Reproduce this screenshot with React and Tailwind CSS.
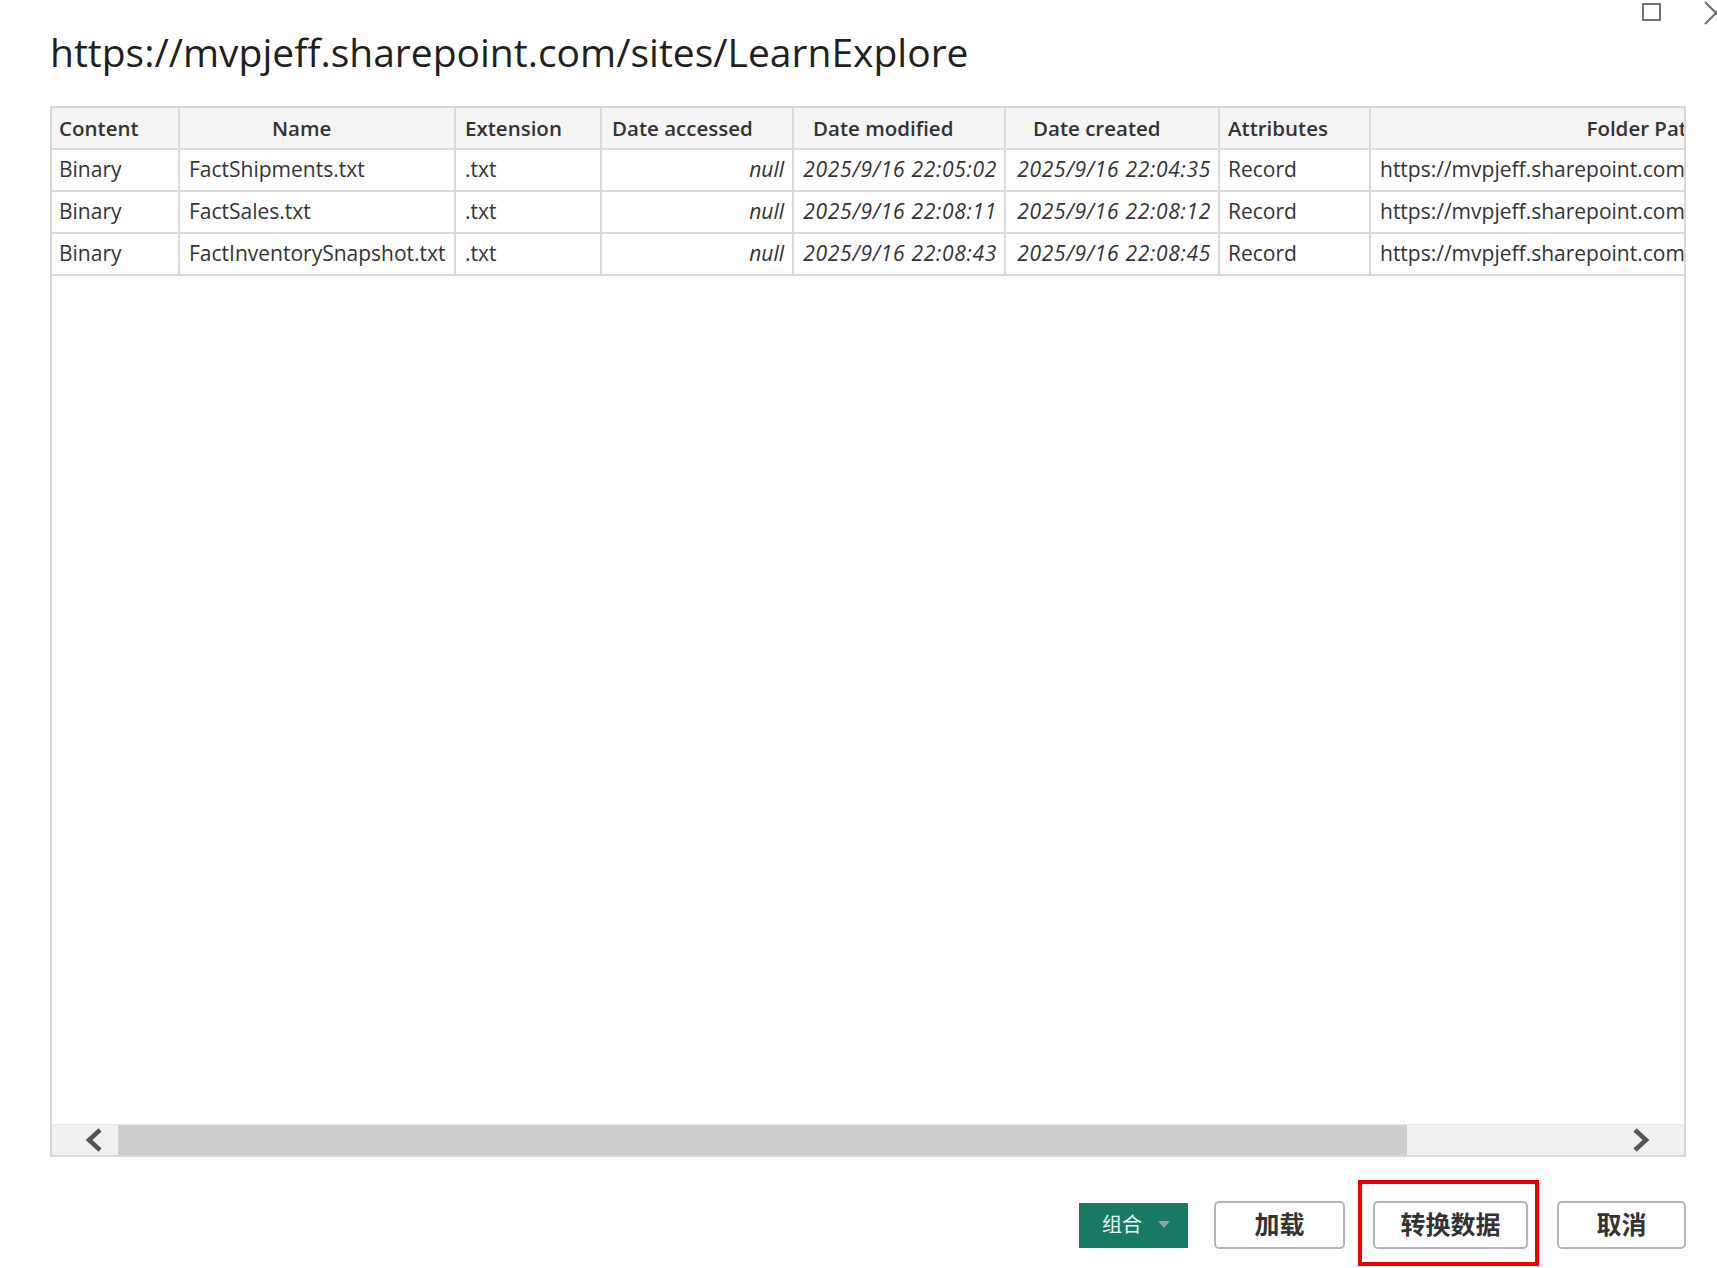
import React from 'react';

const cols = [
    { key: 'content', label: 'Content', w: 'w-[128px]', head: 'pl-[7px] bg-[#ececec]', cell: 'pl-[7px]' },
    { key: 'name', label: 'Name', w: 'w-[276px]', head: 'pl-[92px]', cell: 'pl-[9px]' },
    { key: 'ext', label: 'Extension', w: 'w-[146px]', head: 'pl-[9px]', cell: 'pl-[9px]' },
    { key: 'accessed', label: 'Date accessed', w: 'w-[192px]', head: 'pl-[10px]', cell: 'justify-end pr-[8px] italic' },
    { key: 'modified', label: 'Date modified', w: 'w-[212px]', head: 'pl-[19px]', cell: 'justify-end pr-[7px] italic tracking-[0.7px]' },
    { key: 'created', label: 'Date created', w: 'w-[214px]', head: 'pl-[27px]', cell: 'justify-end pr-[7px] italic tracking-[0.7px]' },
    { key: 'attr', label: 'Attributes', w: 'w-[151px]', head: 'pl-[8px]', cell: 'pl-[8px]' },
    { key: 'path', label: 'Folder Path', w: 'w-[345px]', head: 'justify-end pr-[14px]', cell: 'pl-[9px]' },
];

const rows = [
    { content: 'Binary', name: 'FactShipments.txt', ext: '.txt', accessed: 'null', modified: '2025/9/16 22:05:02', created: '2025/9/16 22:04:35', attr: 'Record', path: 'https://mvpjeff.sharepoint.com/sites/LearnExplore/' },
    { content: 'Binary', name: 'FactSales.txt', ext: '.txt', accessed: 'null', modified: '2025/9/16 22:08:11', created: '2025/9/16 22:08:12', attr: 'Record', path: 'https://mvpjeff.sharepoint.com/sites/LearnExplore/' },
    { content: 'Binary', name: 'FactInventorySnapshot.txt', ext: '.txt', accessed: 'null', modified: '2025/9/16 22:08:43', created: '2025/9/16 22:08:45', attr: 'Record', path: 'https://mvpjeff.sharepoint.com/sites/LearnExplore/' },
];

const Chevron = ({ dir }) => (
    <svg width="20" height="24" viewBox="0 0 20 24">
        <polyline
            points={dir === 'left' ? '16,2 5,12 16,22' : '4,2 15,12 4,22'}
            fill="none"
            stroke="#555"
            strokeWidth="4.5"
        />
    </svg>
);

export default function App() {
    return (
        <div className="relative w-[1717px] h-[1268px] overflow-hidden bg-white font-['Open_Sans','Noto_Sans_CJK_SC',sans-serif] text-[#333]">
            {/* window controls */}
            <div className="absolute left-[1642px] top-[3px] w-[19px] h-[18px] border-2 border-[#707070]" />
            <svg className="absolute left-[1704px] top-[1px]" width="24" height="24" viewBox="0 0 24 24">
                <path d="M1 1 L23 23 M1 23 L23 1" stroke="#707070" strokeWidth="2" />
            </svg>

            <div className="pl-[50px] pr-[31px]">
                <h1 className="h-[106px] flex items-center pb-[2px] text-[39px] text-[#1f1f1f]">
                    https://mvpjeff.sharepoint.com/sites/LearnExplore
                </h1>

                <div className="h-[1051px] border-2 border-[#d8d8d8] flex flex-col overflow-hidden">
                    <div className="flex">
                        {cols.map((c) => (
                            <div
                                key={c.key}
                                className={`${c.w} shrink-0 h-[42px] flex items-center border-r-2 border-b-2 border-[#dadada] bg-[#f5f5f5] font-semibold text-[20.5px] whitespace-nowrap ${c.head}`}
                            >
                                {c.label}
                            </div>
                        ))}
                    </div>
                    {rows.map((r, i) => (
                        <div key={i} className="flex">
                            {cols.map((c) => (
                                <div
                                    key={c.key}
                                    className={`${c.w} shrink-0 h-[42px] flex items-center border-r-2 border-b-2 border-[#dadada] text-[21px] whitespace-nowrap overflow-hidden ${c.cell}`}
                                >
                                    {r[c.key]}
                                </div>
                            ))}
                        </div>
                    ))}
                    <div className="flex-1" />
                    <div className="h-[31px] flex bg-[#f0f0f0] border-t border-[#e6e6e6]">
                        <div className="w-[66px] flex items-center pl-[32px]">
                            <Chevron dir="left" />
                        </div>
                        <div className="w-[1289px] bg-[#cdcdcd]" />
                        <div className="flex-1 flex items-center justify-end pr-[33px]">
                            <Chevron dir="right" />
                        </div>
                    </div>
                </div>

                <div className="mt-[44px] flex justify-end items-center">
                    <div className="w-[109px] h-[45px] bg-[#167a65] flex items-center pl-[23px] gap-[16px] text-[20px] text-[#eef8f4]">
                        <span>组合</span>
                        <svg width="12" height="8" viewBox="0 0 12 8">
                            <polygon points="0,0 12,0 6,7" fill="#8aa69d" />
                        </svg>
                    </div>
                    <button className="ml-[26px] w-[131px] h-[48px] border-2 border-[#b5b5b5] rounded-[5px] bg-white text-[25px] font-bold text-[#333]">
                        加载
                    </button>
                    <div className="relative ml-[28px]">
                        <button className="w-[155px] h-[48px] border-2 border-[#b5b5b5] rounded-[5px] bg-white text-[25px] font-bold text-[#333]">
                            转换数据
                        </button>
                        <div className="absolute left-[-15px] right-[-11px] top-[-21px] bottom-[-17px] border-4 border-[#ee0000]" />
                    </div>
                    <button className="ml-[29px] w-[129px] h-[48px] border-2 border-[#b5b5b5] rounded-[5px] bg-white text-[25px] font-bold text-[#333]">
                        取消
                    </button>
                </div>
            </div>
        </div>
    );
}
